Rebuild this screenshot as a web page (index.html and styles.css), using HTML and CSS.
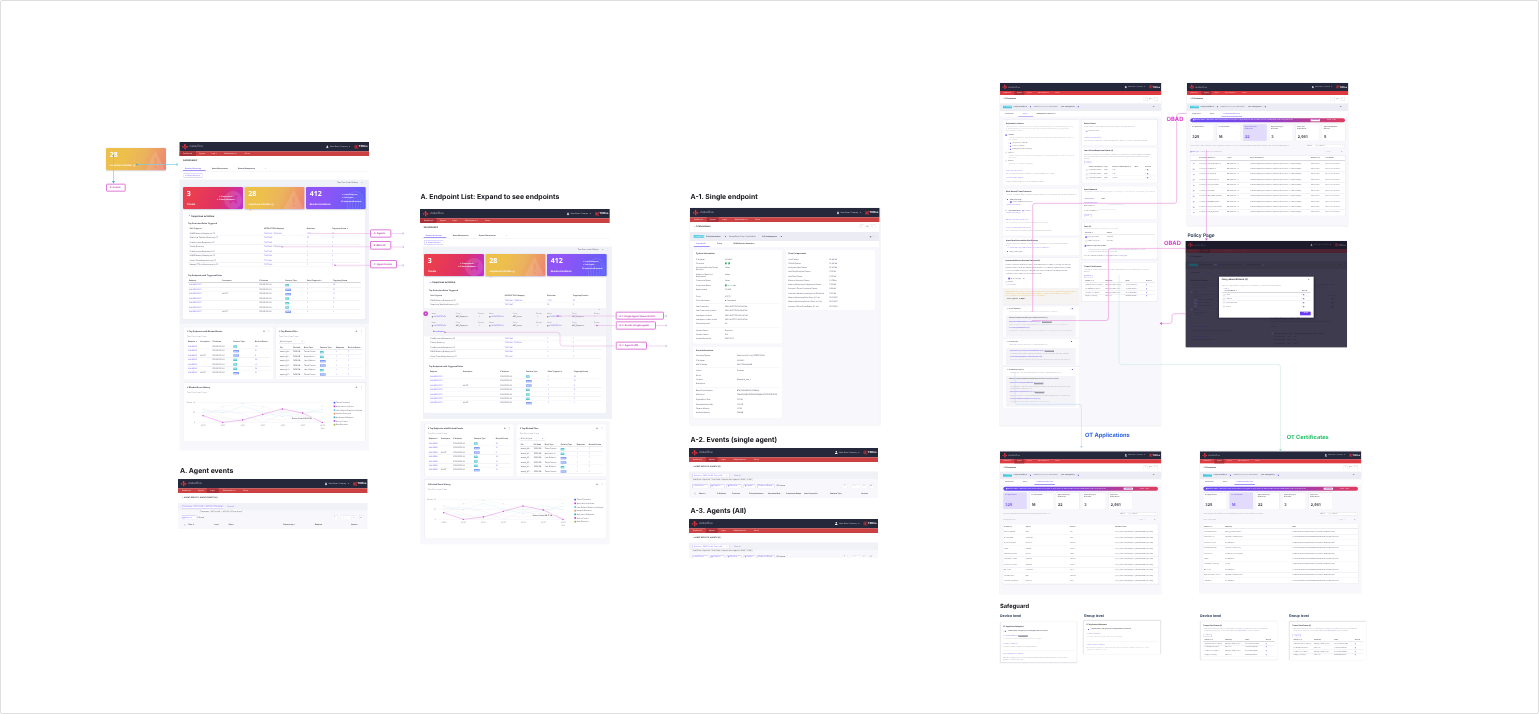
FILE: index.html
```html
<!DOCTYPE html>
<html lang="en">
<head>
<meta charset="utf-8">
<title>Stellar flow board</title>
<link rel="stylesheet" href="styles.css">
</head>
<body>
<main class="viewport"><div class="board" id="board"></div></main>
<script src="app.js"></script>
</body>
</html>
```

FILE: styles.css
```css
* { box-sizing: border-box; }
body { margin: 0; background: #fff; font-family: Inter, "Liberation Sans", sans-serif; }
.viewport { position: relative; width: 1539px; height: 714px; overflow: hidden; border: 1px solid #dedede; border-radius: 2px; }
/* The board is laid out at three units per pixel and shown at one third. */
.board { position: absolute; left: -1px; top: -1px; width: 4617px; height: 2142px; transform: scale(.33333333); transform-origin: 0 0; text-rendering: geometricPrecision; }
.frame, .note, .label, .links { position: absolute; }
.frame, .box { display: flex; flex-direction: column; }
.frame { background: #fff; font-size: 5px; color: #4a4a60; overflow: hidden; }
.frame.edge, .frame.ot { box-shadow: 0 0 4px #d8d8de; }
.frame.ot { font-size: 4.5px; }
.frame.open { overflow: visible; }
.box, .row, .side { flex: none; }
.side { display: flex; align-items: flex-start; }
.row { display: grid; align-items: center; align-content: center; white-space: nowrap; line-height: 1; }
.row > span { display: flex; align-items: center; gap: 2px; min-width: 0; }
.row svg { display: block; flex: none; }
.links { left: 0; top: 0; width: 4617px; height: 2142px; fill: none; }
.note { white-space: nowrap; line-height: 1; font-weight: 700; transform: translateY(-50%); color: #16161c; font-size: 20.6px; }
.note.safe { font-size: 17.3px; }
.note.mid { font-size: 14.6px; color: #23344c; font-weight: 600; }
.note.small { font-size: 10.8px; color: #2b405a; }
.note.obad { font-size: 17.4px; color: #e23bd3; }
.note.blue { font-size: 17.2px; color: #2f63e0; }
.note.green { font-size: 17px; color: #22bd62; }
.label { display: flex; align-items: center; padding-left: 8px; border: 3px solid #df7ad9; border-radius: 3px; background: #fff; color: #b93db4; font-size: 7.1px; font-weight: 700; white-space: nowrap; }
.topbar { background: #25273a; color: #fff; font-size: 5px; }
.topbar .brand { font-size: 1.75em; font-weight: 400; color: #a9aab6; }
.topbar .user { color: #d4d4dc; }
.topbar .tx { font-size: 1.7em; font-weight: 600; letter-spacing: -.03em; }
.nav { background: #cb4142; color: #f3caca; font-weight: 500; font-size: 5px; }
.ot .topbar, .ot .nav { font-size: 4.25px; }
.ot .nav { background: #dc3940; }
.navon { background: #a62f38; }
.gray { background: #f1f1f8; }
.light { background: #f8f8fc; }
.band { background: #ececf5; }
.h { font-weight: 700; color: #2f2f3b; font-size: 6.2px; }
.h.lg { font-size: 6.7px; }
.h5 { font-weight: 700; color: #3a3a48; font-size: 5.9px; }
.h5.caps { font-size: 5.4px; }
.ot .h5 { font-size: 4.9px; }
.th { font-weight: 600; color: #3c3c48; }
.m { color: #9393a6; }
.p { color: #7a5cf0; }
.g { color: #1fae55; }
.b { font-weight: 700; }
.tr { box-shadow: inset 0 -1px #e6e6ef; }
.thline { box-shadow: inset 0 -1px #b0b0bc; font-weight: 600; color: #3c3c48; }
.clip { overflow: hidden; }
.panel { background: #fff; border-radius: 4px; box-shadow: 0 0 3px #e8e8f1; }
.ob { box-shadow: inset 0 0 0 1px #a899f2; border-radius: 2px; color: #7a5cf0; background: #fff; }
.gb { box-shadow: inset 0 0 0 1px #d4d4e0; border-radius: 2px; background: #fff; }
.under { background: #7c5cf4; }
.rule { background: #e6e6ee; }
.card { position: relative; border-radius: 4px; color: #fff; font-weight: 600; box-shadow: 0 1px 4px #cfcfe0; }
.c1 { background: linear-gradient(110deg, #ea3d50 20%, #df3164 60%, #bf2ed2); }
.c2 { background: linear-gradient(110deg, #edc04c 30%, #ebb35c 60%, #ee8274); }
.c3 { background: linear-gradient(110deg, #8f55f6 30%, #7a59f7 60%, #5a5ff8); }
.big { font-family: "Open Sans", sans-serif; font-size: 21px; font-weight: 700; }
.cl { font-size: 6.6px; }
.mark { position: absolute; right: 2px; bottom: 0; width: 60px; height: 60px; opacity: .12; }
.tip { width: 0; height: 0; border: 5px solid transparent; border-top-color: #edb62f; border-bottom: 0; }
.pill { height: 7px; width: 11px; background: #55c6d4; color: #fff; font: 600 4px/7px Inter, sans-serif; text-align: center; }
.pill.s { width: 17px; background: #7f9df3; }
.stat { background: #fff; border-radius: 3px; box-shadow: 0 0 3px #e6e6f0; }
.stat.on { background: #e2dbfc; color: #6d4df0; }
.num { font-size: 11px; font-weight: 700; color: #33333f; }
.on .num, .on .th { color: #6d4df0; }
.ribbon { border-radius: 6px; background: linear-gradient(90deg, #6a48f2 15%, #8a3fd0 50%, #e03c5c); color: #fff; overflow: hidden; }
.done { width: 28px; height: 6px; background: #fff; color: #8844cc; text-align: center; line-height: 6px; }
.cyan { background: #49cbdc; border-radius: 1px; color: #fff; }
.tg { display: inline-block; flex: none; width: 9px; height: 5px; border-radius: 3px; border: 1px solid #d3d0ec; border-right: 4px solid #6f51f0; }
.cb { display: inline-block; flex: none; width: 5px; height: 5px; border: 1px solid #b9b9cc; border-radius: 1px; }
.cb.f { background: #6b4bf0; border-color: #6b4bf0; }
.rd { border-radius: 50%; }
.gq { display: inline-block; width: 5px; height: 6px; background: #31b45f; }
.gd { display: inline-block; width: 3px; height: 3px; background: #31b45f; }
.tag { background: #9a9aaa; color: #fff; padding: 1px 2px; }
.warn { background: #f5f4f3; color: #e5b84e; }
.sub { background: #f3f3f8; }
.primary { background: #6a3df0; color: #fff; font-weight: 600; }
.dim.frame { background: #3e3b4f; color: #27253a; }
.dim .topbar { background: #1c1a2b; }
.dim .topbar span { opacity: .6; }
.dim .nav { background: #4d2231; color: #793649; }
.dim .navon { background: #421d2c; }
.dim .band { background: #393648; }
.dim .cyan { background: #1e5864; }
.dim .th, .dim .h5 { color: #22202f; }
.dim .m { color: #2d2a3d; }
.dim .p { color: #35286f; }
.dim .tg, .dim .cb { opacity: .3; }
.dim .modal { background: #fff; box-shadow: 0 2px 6px #15132a; color: #55556a; }
.dim .modal .tg, .dim .modal .cb { opacity: 1; }
.dim .modal .th { color: #444450; }
.dim .modal .m { color: #9393a6; }
.dim .modal .p { color: #7a5cf0; }
.chart { display: block; overflow: visible; }
```

FILE: app.js
```js
// Layout helpers. A box keeps its children in one coordinate space and
// turns their positions into margins of ordinary flow items.
const stack = (items, x0, y0) => {
  let c = y0;
  return items.flat(3).map(i => { const m = i.top - c; c = i.top + i.h; return i.render(m, x0); }).join('');
};
const L = (y, cells, cls = '', o = {}) => {
  const h = o.h || 8;
  return { top: y - h / 2, h, render(m, x0) {
    const x = o.x ?? cells[0];
    let cols = [], html = '';
    for (let i = 0; i < cells.length; i += 2) {
      cols.push(i + 2 < cells.length ? (cells[i + 2] - cells[i]) + 'px' : '1fr');
      html += `<span>${cells[i + 1]}</span>`;
    }
    return `<div class="row ${cls}" style="margin:${m}px 0 0 ${x - x0}px;height:${h}px;${o.w ? `width:${o.w}px;` : ''}padding-left:${cells[0] - x}px;grid-template-columns:${cols.join(' ')}">${html}</div>`;
  } };
};
const B = (x, y, w, h, cls, items = [], ix = x, iy = y, extra = '') => ({ x, w, top: y, h, render: (m, x0) =>
  `<div class="box ${cls}" style="margin:${m}px 0 0 ${x - x0}px;width:${w}px;height:${h}px">${stack(items, ix, iy)}${extra}</div>` });
const H = (y, h, boxes) => ({ top: y, h, render(m, x0) {
  let c = x0;
  return `<div class="side" style="margin-top:${m}px;height:${h}px">${boxes.map(b => { const s = b.render(b.top - y, c); c = b.x + b.w; return s; }).join('')}</div>`;
} });
const table = (x, w, y, first, pitch, xs, head, rows) => [
  L(y, xs.flatMap((v, i) => [v, head[i]]), 'thline', { x, w, h: pitch * .9 }),
  ...rows.map((r, k) => L(first + k * pitch, xs.flatMap((v, i) => [v, r[i] ?? '']), 'tr', { x, w, h: pitch }))];
const para = (x, w, y, lines, cls = 'm', p = 6) => lines.map((t, i) => L(y + i * p, [x, t], 'clip ' + cls, { w, h: 6 }));
const frame = (x, y, w, h, items, ix = 0, iy = 0, cls = '') =>
  `<section class="frame ${cls}" style="left:${x}px;top:${y}px;width:${w}px;height:${h}px">${stack(items, ix, iy)}</section>`;
const P = t => `<span class="p">${t}</span>`;
const ICS = '<b class="pill">ICS</b>', SRV = '<b class="pill s">Server</b>';
const TG = '<i class="tg"></i>', CB = '<i class="cb"></i>', CF = '<i class="cb f"></i>', RD = '<i class="cb rd"></i>', RF = '<i class="cb rd f"></i>';
const CHEV = '<svg width="7" height="5" viewBox="0 0 7 5" fill="none" stroke="#6a4bf0" stroke-width="1.500"><path d="M.5 4 3.500 1l3 3"/></svg>';

const logo = k => `<svg width="${18 * k}" height="${18 * k}" viewBox="0 0 18 18" fill="#e5343c"><path d="M0 8h4l2 2-2 2-4-1zM7 0l4 2v6L8 10 6 7zM11 8h7v3l-4 1-4-2zM7 10l4 2v6l-4-2z"/></svg>`;
const man = k => `<svg width="${8 * k}" height="${9 * k}" viewBox="0 0 8 9" fill="#fff"><circle cx="4" cy="2.500" r="2.200"/><path d="M0 9V7l2.500-1.500h3L8 7v2z"/></svg>`;
const hex = k => `<svg width="${12 * k}" height="${13 * k}" viewBox="0 0 12 13" fill="none" stroke="#e5343c" stroke-width="2"><path d="M3 1 0 6.500 3 12M6 1v11M3 4l6 5M9 4l-6 5M9 1h3v11H9"/></svg>`;

const header = (x, y, w, active) => {
  const k = w / 569, q = (...c) => c.map((v, i) => i % 2 ? v : x + v * k);
  const tabs = [[0, 50, 12, 'Dashboard'], [50, 36, 60, 'Agents'], [86, 36, 96, 'Logs ▾'], [122, 62, 134, 'Administration ▾'], [184, 40, 196, 'About']];
  return [
    B(x, y, w, 28 * k, 'topbar', [L(y + 14 * k, q(8, logo(k), 29, '<span class="brand">stellarOne</span>', 440, man(k), 452, '<span class="user">Menu Demo Company</span>', 510, '▾', 525, hex(k), 538, '<span class="tx">TXOne</span>'), '', { h: 20 * k })]),
    B(x, y + 28 * k, w, 14 * k, 'nav', [H(y + 28 * k, 14 * k, tabs.map((t, i) => B(x + t[0] * k, y + 28 * k, t[1] * k, 14 * k, i === active ? 'navon' : '', [L(y + 35 * k, [x + t[2] * k, t[3]])])))])];
};

// Security dashboard
const ip = '192.168.222.141', dv = P('WIN-DESKTOP1');
const cardRow = (x, y) => H(y, 66, [
  B(x, y, 180, 66, 'card c1', [L(y + 19, [x + 11, '3'], 'big', { h: 18 }), L(y + 28, [x + 108, 'x &nbsp;Compromised ›'], '', { h: 6 }), L(y + 38, [x + 101, '<span style="color:#ffd35c">▲</span> 5 Attack Attempted']), L(y + 51, [x + 12, 'Threats'], 'cl')], x, y,
    '<svg class="mark" viewBox="0 0 60 60" fill="#fff"><path fill-rule="evenodd" d="M32 6a27 27 0 1 0 .1 0zM20 23l5-5 8 8 8-8 5 5-8 8 8 8-5 5-8-8-8 8-5-5 8-8z"/></svg>'),
  B(x + 185, y, 179, 66, 'card c2', [L(y + 19, [x + 196, '28'], 'big', { h: 18 }), L(y + 51, [x + 196, 'Suspicious Activities &nbsp;ⓘ'], 'cl')], x + 185, y,
    '<svg class="mark" viewBox="0 0 60 60" fill="#fff"><path fill-rule="evenodd" d="M30 2 60 60H0zM27 22h6v20h-6zM27 47h6v6h-6z"/></svg>'),
  B(x + 369, y, 179, 66, 'card c3', [L(y + 19, [x + 380, '412'], 'big', { h: 18 }), L(y + 23, [x + 478, 'x Login Behaviors ›']), L(y + 33, [x + 478, 'x Unit Logins ›']), L(y + 43, [x + 474, '29 Application Behaviors ›']), L(y + 52, [x + 380, 'Baseline Deviations'], 'cl')], x + 369, y,
    '<svg class="mark" viewBox="0 0 60 60" fill="none" stroke="#fff" stroke-width="3"><path d="M8 60C2 20 18 8 32 8s27 12 22 50M16 60c-6-30 4-43 16-43s20 12 14 43M24 60c-5-24 0-34 8-34s12 12 6 34M32 34v26"/></svg>')]);
const dashTop = [
  header(0, 0, 569, 0),
  L(56, [11, 'DASHBOARDS'], 'h'),
  L(79, [17, P('Security Monitoring'), 98, 'Asset Management', 176, 'System Management', 257, '+'], 'th'),
  B(11, 85, 68, 1.5, 'under'), B(0, 86.500, 569, 1, 'rule'),
  B(12, 94, 58, 13, 'ob', [L(100.500, [17, '⚙ Widget Manager'])])];
const period = L(123, [473, 'Time Period: Last 30 Days', 546, '⟳', 560, '⋮']);
const ruleCols = [31, 254, 382, 458];
const ruleHead = ['Rule Triggered', 'MITRE ATT&CK Mapping', 'Endpoints', 'Triggering Events ↓'];
const ruleRows = [
  ['LSASS Memory Dumping via C2', P('T1003.001 · T1003.004'), P('4,371'), P('28')],
  ['Suspicious Task Modification by C2', P('T1053.005'), P('28'), P('11')],
  ['Post Execution Enumeration C2', P('T1055.002'), P('5'), P('5')],
  ['Penalty Event Log', P('T1070.001 · T1070.014'), P('3'), P('3')],
  ['Post Execution Enumeration C2', P('T1055.001'), P('4'), P('3')],
  ['LSASS Memory Dumping via C2', P('T1003.001'), P('3'), P('3')],
  ['Create Token Manipulation by C2', P('T1134.001'), P('3'), P('3')],
  ['Manage PT Root Deactivation by C2', P('T1553.004'), P('3'), P('3')]];
const epHead = ['Endpoint', 'Description', 'IP Address', 'Function Type', 'Rules Triggered ↓', 'Triggering Events'];
const epRows = [['–', ICS, 6, 30], ['–', SRV, 5, 21], ['HQ-RT', SRV, 5, 11], ['–', ICS, 4, 15], ['–', ICS, 3, 7], ['–', ICS, 3, 6], ['HQ-RT', SRV, 2, 4]]
  .map(r => [dv, r[0], ip, r[1], P(r[2]), P(r[3])]);
const chart = `<svg class="chart" width="560" height="100" viewBox="42 240 560 100" fill="none">
 <path d="M85 248H462M85 277H462M85 307H462" stroke="#e8e8f0"/>
 <g stroke-width="1.300" opacity=".3"><path d="M99 267 158 278 218 259 278 276 337 289 398 280 457 268" stroke="#87c9ea"/><path d="M99 289 158 260 218 250 278 260 337 276 398 289 457 258" stroke="#c3dccb"/><path d="M99 280 158 296 218 299 278 290 337 278 398 265 457 278" stroke="#9dd9e2"/><path d="M99 267 158 289 218 307 278 296 337 300 398 289 457 300" stroke="#efc8ad"/><path d="M99 275 158 271 218 283 278 307 337 282 398 297 457 307" stroke="#b2bff5"/></g>
 <g fill="#a3d6cb" opacity=".7"><circle cx="99" cy="267" r="1.500"/><circle cx="158" cy="260" r="1.500"/><circle cx="218" cy="250" r="1.500"/><circle cx="278" cy="260" r="1.500"/><circle cx="337" cy="289" r="1.500"/><circle cx="457" cy="258" r="1.500"/><circle cx="457" cy="268" r="1.500"/><circle cx="158" cy="278" r="1.500"/></g>
 <path d="M99 287 158 307 218 300 278 283 337 267 398 279 457 307" stroke="#e07fe0" stroke-width="1.400"/>
 <g fill="#d234d6"><circle cx="99" cy="287" r="2"/><circle cx="158" cy="307" r="2"/><circle cx="218" cy="300" r="2"/><circle cx="278" cy="283" r="2"/><circle cx="337" cy="267" r="2"/><circle cx="398" cy="279" r="2"/><circle cx="457" cy="307" r="2"/></g>
 <path d="M362 290h68v12h-68z" fill="#fff" stroke="#e6e6ee" stroke-width=".6"/>
 <g font-size="5" fill="#8a8a9a"><text x="50" y="250">Events · 10</text><text x="69" y="279">25</text><text x="72" y="309">0</text><text x="93" y="317">07/22</text><text x="152" y="317">07/23</text><text x="212" y="317">07/24</text><text x="272" y="317">07/25</text><text x="332" y="317">07/26</text><text x="392" y="317">07/27</text><text x="451" y="317">07/28</text><text x="453" y="326">Date</text></g>
 <text x="366" y="298" font-size="5" font-weight="600" fill="#44444f">Device Control 08:17: <tspan font-weight="800">28</tspan></text>
 <g font-size="5" fill="#55556a">${[['Threat Prevention', '#4c5cf0'], ['Application Lockdown', '#d22fd6'], ['User-Defined Suspicious Objects', '#57c4e8'], ['Intrusion Detection', '#f0915a'], ['Application Safeguard', '#2ba7c0'], ['Device Control', '#b04ad8'], ['Data Execution', '#8fb83b']].map((l, i) => `<rect x="491" y="${245.500 + i * 11}" width="5" height="5" fill="${l[1]}"/><text x="498" y="${250 + i * 11}">${l[0]}</text>`).join('')}</g></svg>`;
const widgets = (y, h) => B(0, y, 569, h, 'light', [
  H(22, 155, [
    B(42, 22, 267, 155, 'panel', [
      L(35, [51, '⠿ Top Endpoints with Blocked Events', 280, '⟳', 294, '⋮'], 'h5'),
      L(49, [51, 'Time Period: Last 7 days'], 'm'),
      table(51, 249, 67, 80, 13.300, [54, 91, 127, 190, 255], ['Endpoint ↓', 'Description', 'IP Address', 'Function Type', 'Blocked Events'],
        [['–', ICS, '131'], ['–', SRV, '21'], ['HQ-RT', SRV, '8'], ['–', ICS, '20'], ['–', ICS, '46'], ['–', ICS, '20'], ['HQ-RT', SRV, '21']].map(r => [P('WIN-DESK1'), r[0], ip, r[1], P(r[2])]))]),
    B(317, 22, 269, 155, 'panel', [
      L(35, [327, '⠿ Top Blocked Files', 557, '⟳', 571, '⋮'], 'h5'),
      L(49, [327, 'Time Period: Last 7 days'], 'm'),
      B(326, 62, 78, 9, 'gb', [L(66.500, [330, 'All block types', 395, '▾'])]),
      table(327, 249, 84, 97, 13.300, [330, 369, 402, 450, 498, 534], ['File', 'File Hash', 'Block Type', 'Function Type', 'Endpoints', 'Blocked Events'],
        [['Threat Preven…', ICS], ['Application L…', ICS], ['User-Defined…', SRV], ['Threat Preven…', SRV], ['User-Defined…', ICS], ['Threat Preven…', SRV]].map((r, i) => ['sample_0' + i + '…', '7A7B42B…', r[0], r[1], P('4'), P('5')]))])]),
  B(42, 188, 544, 175, 'panel', [
    L(202, [51, '⠿ Blocked Event History', 557, '⟳', 571, '⋮'], 'h5'),
    L(217, [51, 'Time Period: Last 7 days'], 'm'),
    B(42, 240, 544, 100, '', [], 42, 240, chart)])
], 28, 13);

const dash1 = [dashTop,
  B(0, 113, 569, 434, 'gray', [
    period,
    cardRow(11, 135),
    B(11, 201, 547, 331, 'panel', [
      B(208, 201, 10, 5, 'tip'),
      L(222, [27, CHEV + ' Suspicious Activities'], 'h lg'),
      L(246, [26, 'Top Detection Rules Triggered'], 'h5'),
      table(26, 518, 262, 275, 13.400, ruleCols, ruleHead, ruleRows),
      L(400, [26, 'Top Endpoints with Triggered Rules'], 'h5'),
      table(26, 518, 416, 430, 13.300, [29, 129, 240, 318, 383, 461], epHead, epRows)])]),
  widgets(547, 379)];

const agentLine = y => [L(y, [35, 'Name', 107, 'Group', 175, 'Events', 207, 'Name', 278, 'Group', 349, 'Events', 381, 'Name', 456, 'Group', 522, 'Events'], 'm'),
  L(y + 9, [35, '▣ ' + P('WORKSTATION'), 107, 'ABC_Singapore', 177, P('4'), 207, '▣ ' + P('WORKSTATION'), 278, 'ABC_Japan', 350, P('4'), 381, '▣ ' + P('WORKSTATION'), 456, 'ABC_Singapore', 523, P('4')])];
const dash2 = [dashTop,
  B(9, 113, 567, 517, 'gray', [
    period,
    cardRow(12, 135),
    B(12, 201, 547, 411, 'panel', [
      B(208, 201, 10, 5, 'tip'),
      L(221, [28, CHEV + ' Suspicious Activities'], 'h lg'),
      L(245, [27, 'Top Detection Rules Triggered'], 'h5'),
      table(27, 518, 262, 275, 13.400, ruleCols, ruleHead, ruleRows.slice(0, 2)),
      B(12, 297, 547, 85, 'sub', [L(303, [536, '⊞']), agentLine(314), agentLine(341), L(368, [39, 'Show Details'], 'p b')]),
      ruleRows.slice(2, 7).map((r, k) => L(389 + k * 13.400, ruleCols.flatMap((v, i) => [v, r[i]]), 'tr', { x: 27, w: 518, h: 13.400 })),
      L(474, [27, 'Top Endpoints with Triggered Rules'], 'h5'),
      table(27, 518, 490, 503, 13.300, [30, 129, 240, 318, 383, 461], epHead, epRows)])]),
  widgets(637, 369)];

// Query result lists
const btn = (x, y, w, t, cls = 'ob') => B(x, y, w, 12, cls, [L(y + 6, [x + 4, t])]);
const pager = y => [btn(488, y, 15, '1', 'gb'), btn(515, y, 26, '‹ &nbsp; ›', 'gb'), btn(545, y, 14, '⊞', 'gb'), btn(567, y, 14, '⚙', 'gb')];
const events = [
  header(24, 477, 569, 2),
  L(534, [37, '‹ &nbsp;AGENT RESULTS: AGENT EVENTS (10)'], 'h5 caps'),
  B(24, 549, 569, 78, 'light', [
    B(24, 549, 569, 22, 'gray', [H(555, 11, [B(36, 555, 124, 11, 'ob', [L(560.500, [40, 'Timestamp : 2023-04-08 ~ 2023-07-12 00:00:00', 153, '×'])]), B(172, 555, 30, 11, 'p', [L(560.500, [172, 'Clear all'])])])]),
    B(88, 569, 130, 10, 'gb', [L(574, [91, 'Timestamp : 2023-04-08 ~ 2023-07-12 Rows from X'])]),
    H(586, 12, [btn(36, 586, 43, '▣ Export ▾'), B(82, 586, 40, 12, '', [L(592, [82, '2 Events'])]), ...pager(586)]),
    L(614, [42, CB, 55, 'Time ↓', 133, 'Level', 176, 'Event', 340, 'Function type', 435, 'Endpoint', 543, 'Options'], 'th')])];
const agents = [
  header(27, 54, 567, 1),
  L(111, [38, '‹ &nbsp;AGENT RESULTS: AGENTS (4)'], 'h5 caps'),
  B(27, 125, 567, 79, 'light', [
    B(27, 125, 567, 22, 'gray', [H(131, 11, [B(36, 131, 113, 11, 'ob', [L(136.500, [42, 'Detection : 2023-04-08 · Report OK', 139, '×'])]), B(162, 131, 30, 11, 'p', [L(136.500, [162, 'Clear all'])])])]),
    B(36, 145, 183, 8, 'gb', [L(149, [39, 'Last Event : Agent list : Scan if this computer isn’t registered 10:08 – 15:00 P…'], 'clip', { w: 178 })]),
    H(163, 12, [btn(36, 163, 49, '⊞ Add Group'), btn(90, 163, 44, '▣ Control ▾'), btn(139, 163, 46, '▣ Selection'), btn(190, 163, 36, '▣ Update'), btn(231, 163, 53, '⬒ Import / Export'), B(289, 163, 30, 12, '', [L(169, [289, '128 Agents'])]), ...pager(163)]),
    L(191, [43, CB, 57, 'Name ↓', 111, 'IP Address', 156, 'Protected', 207, 'Policy Inheritance', 264, 'Operation Mod…', 318, 'Component Status', 373, 'Last Connection', 450, 'Function Type', 544, 'Options'], 'th')])];

// Endpoint details
const kv = (x, x2, list) => list.map(r => L(r[0], [x, r[1], x2, r[2]]));
const single = [
  header(30, 84, 569, 1),
  H(133, 13, [B(42, 133, 100, 13, '', [L(139.500, [42, '‹ &nbsp;▢ Workstation'], 'h')]), btn(538, 133, 15, '1', 'gb'), B(557, 133, 8, 12, '', [L(139, [557, '/40'])]), btn(569, 133, 18, '‹ ›', 'gb')]),
  B(30, 156, 569, 27, 'band', [H(165, 8, [B(41, 165, 32, 8, 'cyan', [L(169, [44, 'CONNECTED'])]), B(78, 165, 500, 8, '', [L(169, [78, '<b>Policy Inheritance</b>', 130, TG, 147, 'Inherits From Group: User Default', 247, '<b>Self-management</b>', 297, TG, 569, '▣', 579, '⌄'])])])]),
  L(192, [48, P('General Info'), 111, 'Policy', 160, 'OBAD/Baseline Assurance'], 'th'),
  B(41, 199, 48, 2, 'under'),
  B(30, 201, 569, 534, 'light', [
    H(210, 281, [
      B(39, 210, 267, 281, 'panel', [L(222, [48, 'System Information'], 'h5'),
        kv(48, 135, [[238, 'IP Address', '10.1.100.6'], [250, 'Protection', '<i class="gq"></i>&nbsp; <i class="gq"></i>'], [263, 'Operations Needing Priority', 'Online'], [270, 'Detection', ''], [283, 'Number of Approved', 'Online'], [290, 'Applications', ''], [303, 'Connection Status', 'Online'], [316, 'Component Status', '<i class="gq"></i> Up-to-date'], [329, 'Agent Version', '3.1.2031'], [349, 'Group', 'ICS_TX'], [361, 'Policy Inheritance', '<i class="gd"></i> Customized']]),
        B(48, 371, 250, 1, 'rule'),
        kv(48, 135, [[380, 'Last Connection', '2024-01-29T11:30:12-09:00'], [393, 'Last Component Updated', '2024-01-29T11:30:20-09:00'], [406, 'Last Agent Updated', '2024-01-29T01:30:04-09:00'], [419, 'Last Approved List Update', '2024-01-15T14:30:25-09:00'], [432, 'Patches Imported', 'No']]),
        B(48, 443, 250, 1, 'rule'),
        kv(48, 135, [[451, 'License Status', 'Activated'], [464, 'License Version', 'Full'], [477, 'License Expires On', '2025-12-11']])]),
      B(318, 210, 267, 180, 'panel', [L(222, [325, 'Scan Components'], 'h5'),
        kv(325, 448, ['Virus Pattern', 'CPHOM Pattern', 'AI-Hyperbolism Pattern', 'IntelliTrap Exception Pattern', 'IntelliTrap Pattern', 'Behavior Detection Pattern', 'Memory Monitoring Configuration Pattern', 'Advanced Threat Correlation Pattern', 'Predictive Machine Learning Local File Model', 'Memory Monitoring Scan Driver (64-bit)', 'Memory Monitoring Service Driver (64-bit)', 'Advanced Threat Scan Engine (64-bit)'].map((t, i) => [238 + i * 12.850, t, ['18.405.00', '13.405.00', '12.409.00', '1.927.00', '1.925.00', '2.458.00', '1.322.00', '1.010.00', '1.966.00', '12.55.1053', '12.55.1053', '12.55.1053'][i]]))])]),
    B(39, 501, 267, 213, 'panel', [L(513, [48, 'Asset Information'], 'h5'),
      kv(48, 171, [[528, 'Operating System', 'Windows 10 (64-bit) (FTEST) 22H2'], [541, 'IP Address', '10.1.100.6'], [554, 'MAC Address', '00:15:5D:0A:00:0B']]),
      B(48, 563, 250, 1, 'rule'),
      kv(48, 171, [[573, 'Vendor', 'Siemens'], [587, 'Model', '–'], [600, 'Location', 'Minnesota_Line 4'], [612, 'Description', '–']]),
      B(48, 621, 250, 1, 'rule'),
      kv(48, 171, [[631, 'Baseb Serial Number', 'BT04DUE-NB248JXP8MHA'], [645, 'Main Label', '72AA3D9AB3482F3A6F3D0BACA5CD92F7F18428'], [659, 'System Drive Size', '512 GB'], [673, 'System Available Size', '433 GB'], [686, 'Physical Memory', '16 GB'], [698, 'Available Memory', '380 MB']])])])];

// OT pages
const otHead = (x, y, tab, w = 484) => [
  header(x, y, w, 1),
  H(y + 42, 12, [B(x + 9, y + 42, 80, 12, '', [L(y + 48, [x + 9, '‹ &nbsp;▢ Workstation'], 'h5')]), B(x + 430, y + 42, 14, 12, 'gb', [L(y + 48, [x + 435, '‹'])]), B(x + 446, y + 42, 9, 12, '', [L(y + 48, [x + 446, '1/40'])]), B(x + 458, y + 42, 16, 12, 'gb', [L(y + 48, [x + 461, '‹ ›'])])]),
  B(x, y + 61, w, 23, 'band', [H(y + 68, 8, [B(x + 9, y + 68, 27, 8, 'cyan', [L(y + 72, [x + 12, 'Connected'])]), B(x + 41, y + 68, 430, 8, '', [L(y + 72, [x + 41, '<b>Policy Inheritance</b>', x + 85, TG, x + 101, 'Inherits From Group: User Default', x + 184, '<b>Self-management</b>', x + 228, TG, x + 458, '⚙⌄'])])])]),
  L(y + 92, [x + 15, 'General Info', x + 69, tab === 1 ? P('Policy') : 'Policy', x + 109, tab === 2 ? P('OT/Baseline Assurance') : 'OBAD/Baseline Assurance'], 'th'),
  B(x + (tab === 1 ? 55 : 103), y + 99, tab === 1 ? 45 : 62, 2, 'under')];
const stats = (x, y, on, n) => H(y, 49, [['OT Applications', '', '325'], ['OT Certificates', '', '16'], ['Approved Script', 'Extensions', '22'], ['Approved Logon', 'Accounts', '3'], ['Approved', 'Applications', '2,981'], ['Approved Network', 'Devices', '5']].slice(0, n)
  .map((s, i) => B(x + i * 79, y, 70, 49, 'stat' + (i === on ? ' on' : ''), [L(y + 7, [x + i * 79 + 5, s[0]], 'th'), L(y + 13, [x + i * 79 + 5, s[1]], 'th', { h: 6 }), L(y + 37, [x + i * 79 + 6, s[2]], 'num', { h: 12 })])));
const otBody = (x, y, on, n, h, cols, head, rows, first, desc) => [otHead(x, y, 2),
  B(x, y + 101, 484, h - 101, 'light', [
    B(x + 10, y + 106, 464, 12, 'ribbon', [L(y + 112, [x + 18, '▣ MAINTENANCE', x + 59, 'Maintenance Mode is enabled: all changes on target endpoint will be added in the OT baseline list. Click to stop the mode', x + 371, '<b class="done">Complete</b>', x + 420, '00:15 · 12:00'], '', { w: 450 })]),
    stats(x + 10, y + 124, on, n),
    H(y + 183, 12, [B(x + 10, y + 183, 310, 12, '', [L(y + 188, [x + 10, desc], 'm clip', { w: 308 })]), B(x + 356, y + 183, 36, 10, 'gb', [L(y + 188, [x + 360, 'Search', x + 386, '▾'])]), B(x + 394, y + 183, 79, 10, 'gb', [L(y + 188, [x + 397, 'Search', x + 466, P('⌕')])])]),
    L(y + 206, [x + 10, on === 2 ? P('▣ Manage ▾') + ' 22 Approved Script Extensions' : on ? '16 OT Certificates' : '325 Applications', x + 414, '‹ &nbsp; 1/40 &nbsp; ›', x + 462, '⚙'], 'm'),
    B(x + 10, y + first - 24, 465, rows.length * 16.300 + 17, 'panel', [table(x + 10, 465, y + first - 16, y + first, 16.300, cols.map(c => x + c), head, rows)])])];
const scriptRows = ['Endpoint/Service/ClientTool', 'Endpoint/PresetGrid', 'Endpoint/Script/Host', 'ServicePoint/ScriptHost', 'Endpoint/ScriptHost.exe', 'Endpoint/Host.exe', 'Endpoint/Kernel/Module.exe', 'Endpoint/DeskMerge.exe', 'ServicePoint/ScriptHost.exe', 'ServicePoint/StylusHost'].map(t => [TG, 'C:/' + t, 'Machine:Run · 21', 'C:/Windows/Applications/bin/Software/Customization… C:/Windows/sy…', 'Batch Patch', '2022-11-07 01:08:33']);
const apps = [['Adobe Systems', 'DWG', '10.1'], ['Acrobat DWG', 'SYSREAD', '8.1.0'], ['Dropbox Update', 'Dropbox', '8.1802.1'], ['Elastic', 'Filebeat', '1.22.27'], ['Siemens Germany', 'Dimont', '3.190'], ['Trend Micro Client', 'Siemens', '4.180.21'], ['Johnson Controls', 'Siemens', '1.220.1'], ['MS Tools', 'Scripttree', '3.2.0'], ['Schweitzer Inc', 'ABB', '1.150.25'], ['Trimble Engineering', 'Inteconn', '2.8.0']].map(r => [...r, 'C:/Program Files (x86)/Inc. Systems/Desktop/GridSky']);
const certs = [['Schneider Electric', 'VeriSign Class 3 Public'], ['Certification Co', 'Symantec SHA256 Time'], ['Johnson Control', 'OT7 Network'], ['Rockwell Automat', 'Entrust Root Authority'], ['Johnson CP', 'GlobalSign GCC R45 PKI'], ['Elastic', 'OT7 Network'], ['Trend Micro Security', 'PE-File'], ['MS Tools', 'OT7 Network'], ['Hyundai Electric Inc LLC', 'Symantec SHA256 Time'], ['Trustworth', 'OT7 Network']].map((r, i) => [...r, ['C0D5F7B35E6D74BBA2A0D18FC8F09A3E73A9AD25FB15C', '7EE11D30A2B96F91C1B3B5D6A7BAA76B41B57CF8AAC84B7B26'][i % 2]]);

// Policy page, two columns of panels
const pol = [otHead(30, 24, 1),
  B(30, 125, 484, 927, 'light', [H(134, 868, [
    B(39, 134, 228, 868, '', [
      B(39, 134, 228, 196, 'panel', [L(146, [48, 'Application Lockdown'], 'h5'),
        para(48, 210, 157, ['This application Lockdown feature on the device will be enabled upon implementing the policy', 'If disabled settings, it might stop & not stop the lockdown while scanning 3rd party items', 'will be used for the list']),
        L(181, [46, RF + ' &nbsp;<b>Enable</b>']), para(57, 196, 190, ['Enabling application lockdown will analyze and activate the allowed list setting and deploy on', 'applications']),
        L(205, [55, TG + ' &nbsp;DLL/Driver Lockdown']), L(214, [55, TG + ' &nbsp;Script Lockdown']), L(223, [55, TG + ' &nbsp;Intelligent Runtime Learning']),
        L(233, [46, RD + ' &nbsp;Silence']), para(57, 196, 244, ['There is application lockdown and the analyzing of scanned files will not need to block from', 'application']),
        L(258, [46, RD + ' &nbsp;Disable']), para(57, 100, 268, ['Application Lockdown is disabled']),
        L(287, [48, 'Approved File Type (3)'], 'p'), para(48, 180, 297, ['Run configured software to OBAD for configured settings to OT files']),
        L(310, [48, '▢ Predict Insert Settings'], 'p'), para(48, 180, 320, ['Specify Settings in which 1 hour is installed file setting'])]),
      B(39, 342, 228, 140, 'panel', [L(351, [48, 'Multi-Method Threat Prevention'], 'h5'), para(48, 213, 360, ['The Real-Time Multi-Method Threat Prevention allows you to scan and quick check the threat list on the endpoint']),
        L(374, [46, TG + ' &nbsp;<b>Real-Time Scan</b>']), L(382, [60, CF + ' Predictive Machine Learning']), L(391, [48, '› Advanced Settings'], 'p'),
        L(407, [46, CB + ' &nbsp;<b>Scheduled Scan</b> &nbsp; ' + P('▣ Schedule')]), L(415, [48, '› Advanced Settings'], 'p'),
        L(436, [48, 'Manual Scan Item Exclusion (3)'], 'p'), para(48, 180, 445, ['Run configured Source to Filters that will expect in the scan']),
        L(458, [48, 'Action on the Infected Endpoint (3)'], 'p'), para(48, 180, 467, ['Run configured Source scan log path to adjust threat data setup'])]),
      B(39, 489, 228, 51, 'panel', [L(497, [48, 'Agent Data Abnormalities Alert Settings'], 'h5'), para(48, 213, 506, ['Enable to expect the system to create changed data sent from another server will setup', 'scan']), L(518, [53, '▢ Threat Alert High-Risk Operation at Suspicious Behavior'], 'p'), L(530, [46, TG + ' &nbsp;Daily Threat Agent'])]),
      B(39, 548, 228, 140, 'panel', [L(557, [46, 'Operations Behavior Anomaly Detection (8)'], 'h5'),
        para(46, 213, 569, ['⦾ Learn: Collect by network Anomaly of the baseline and process at no dangerous changing', '⦾ Detect: OBAD only when a system will be allowed to process and a system which checked', '⦿ Enforce: Request changing process will be blocked. This Mode includes learned data', '&nbsp; changing. Set process to block in the environment'], '', 9),
        L(611, [55, CF + ' Allow Privilege ' + TG]), L(622, [46, RD + ' Disable']), L(630, [48, 'Load Policies'], 'p'),
        B(39, 639, 228, 49, 'warn', [para(46, 214, 650, ['⚠ Multiple Mode of Behavior Stage, OBAD: Detection/Learn scan OTPL detected by Agent Operation', 'already running; which were allowed Baseline will not create “OBAD Baseline” on the device', 'and OT Assurance in the Agent list. Click OT Apps setup'], '', 6), L(673, [51, 'Learning Mode', 88, '<b>7 days ▾</b>'], 'th')])]),
      B(39, 694, 228, 92, 'panel', [L(702, [52, '▸ <b>□ Anti-Behavior</b>', 240, TG]), para(57, 190, 712, ['Control file control to watch latest data and threat behaviour settings']),
        B(48, 721, 209, 64, 'sub', [L(730, [57, '<b>Default ▢ Enable the Settings to enable the scanning</b>']), L(741, [57, 'Approved OBAD Behavior or Addition (4) ⓘ &nbsp;<span class="tag">APPROVED</span>'], 'p b'), para(57, 190, 751, ['This configuration cannot enable Network to check Addition from 1 to 17 Behaviors']), L(760, [57, '▢ File Dropped Behavior (3)'], 'p b'), para(57, 190, 769, ['An application runs an invalid log from the application to change and to avoid at setup processing'])])]),
      B(39, 792, 228, 80, 'panel', [L(800, [52, '▸ <b>□ AntiScript</b>', 238, TG]), para(57, 190, 810, ['Check file and script the sound of trusted system logs']),
        B(48, 819, 209, 51, 'sub', [L(828, [60, 'Approved Logon Script Exclude Behaviors (3) &nbsp;<span class="tag">APPROVED</span>'], 'p b'), para(60, 180, 837, ['To be approved by the company at the main to avoid if unauthorized scan operate to threat']), L(847, [60, '▢ PowerShell Register Script Extensions (4)'], 'p b'), para(60, 180, 856, ['Scan approved file or suspicious policy and unidentified script settings will remain by setup'])])]),
      B(39, 875, 228, 124, 'panel', [L(884, [52, '▸ <b>□ Baseline/Integrity</b>', 240, TG]), para(60, 170, 894, ['Check all file controls and the application threat to registries data policy']),
        B(48, 903, 209, 92, 'sub', [L(912, [57, '<b>Default ▢ Analyze Additional Applications Script on a policy unit list</b>']), L(925, [60, 'Application Safeguard Whitelist <span class="tag">APPROVED</span>'], 'p b'), para(60, 190, 935, ['Click Baseline, it will add a path in Application setup that changes. Click the recovery', 'check restarting settings to (4)']), L(952, [60, 'Approved Script/Execution (4) ⓘ <span class="tag">APPROVED</span>'], 'p b'), para(60, 180, 962, ['Agent policy will not work to baseline setting to restart the application to the enforced']), L(972, [60, '▢ Policy Assurance Addition to Script (4)'], 'p b'), para(60, 120, 982, ['This application requires to get detection on the target if'])])])]),
    B(275, 134, 227, 545, '', [
      B(275, 134, 227, 76, 'panel', [L(146, [282, 'Device Control'], 'h5'), para(282, 210, 156, ['Block unauthorized access (CD/USB/SD storage) to managed endpoints']), L(169, [284, TG + ' &nbsp;Device Control']), L(188, [282, 'Trusted USB Devices (1)'], 'p'), para(282, 212, 198, ['The USB device will be recorded at allowed list to restrict to accept to removable devices'])]),
      B(275, 219, 227, 104, 'panel', [L(228, [282, 'User-Defined Suspicious Objects (3)'], 'h5'), para(282, 213, 239, ['Add suspicious file indicators based on setting imported endpoint objects intelligence systems', 'actions. Objects will be blocked to advanced incident and logged agents. See also: Blocked', 'settings']), B(282, 258, 22, 10, 'ob', [L(263, [285, '+ Add ▾'])]),
        table(282, 213, 275, 286, 11.500, [288, 296, 342, 367, 434, 466], ['', 'Suspicious Object ↓', 'Type', 'Detection Status (Alert) ↓', 'Note', 'Actions'], [0, 1, 2].map(i => [CB, 'C:\\Virus\\bad.exe…', 'Hash', ['Low', 'Low', 'Critical'][i], '–', P('✎ ▣')]))]),
      B(275, 334, 227, 98, 'panel', [L(343, [282, 'Agent Password'], 'h5'), para(282, 213, 352, ['The password will be used by the agent for local sign-in on an endpoint. The following characters will be not used']), L(373, [284, P('Administrator'), 335, 'User'], 'th'), B(282, 381, 40, 1, 'under'), H(388, 9, [B(282, 388, 70, 9, '', [L(393, [282, 'New Password'])]), B(352, 388, 52, 9, 'gb')]), H(403, 9, [B(282, 403, 43, 9, '', [L(408, [282, 'Confirm Password'])]), B(325, 403, 52, 9, 'gb')]), B(282, 418, 24, 9, 'ob', [L(422.500, [286, 'Save'])])]),
      B(275, 444, 227, 109, 'panel', [L(455, [282, 'Patch (2)'], 'h5'), para(282, 213, 463, ['Upload a Security OTPL(3rd) patch components']), table(282, 213, 475, 487, 12, [286, 350], ['Patches ↓', 'Version'], [[CF + ' Patch_2.1.0.1031', '2.0.1011B'], [CB + ' Stellar 3.1 Patch1', '3.1.0.1182']]), L(513, [284, CF + ' <b>Pause Component update</b>']), para(295, 190, 525, ['The update will not be loaded. The agency will not need the last setting for patch', 'update, the server will push components']), L(544, [282, 'You can Enable the pattern for 24 pages to the ' + P('Update') + ' page'])]),
      B(275, 564, 227, 115, 'panel', [L(574, [282, 'Trusted Certifications'], 'h5'), para(282, 213, 584, ['Files will be trusted by Agents to avoid executable files and program settings by configured', 'settings']), B(282, 600, 26, 9, 'ob', [L(604.500, [285, '+ Import'])]),
        table(282, 213, 619, 630, 11.500, [286, 346, 407, 468], ['Issued To ↓', 'Issued By', 'Hash', 'Actions'], [['Siemens Tech Company', 'Verisign Class 3 Publ…', '7B4F7C0BDFD…'], ['Rockwell Automation', 'Verisign Class 3 Pub…', '7C0BDFDFABC…'], ['Emerson Process Co', 'Verisign Class 3 Pub…', '5F7C0BDFDAB…'], ['Beijing Company', '360.com', '85AAFAD3A08…']].map(r => [...r, P('▮')]))])])])])];

const modalRow = (y, t) => L(y, [204, CB + ' &nbsp;' + t, 439, P('✎ ▣')], 'tr', { x: 202, w: 265, h: 11 });
const policyDim = [header(92, 48, 484, 1),
  L(96, [101, '‹ &nbsp;▢ Workstation'], 'h5'),
  B(92, 109, 484, 23, 'band', [H(116, 8, [B(101, 116, 27, 8, 'cyan'), B(133, 116, 430, 8, '', [L(120, [133, '<b>Policy Inheritance</b>', 177, TG, 190, 'Inherits From Group: User Default', 276, '<b>Self-management</b>', 320, TG, 550, '⚙⌄'])])])]),
  L(143, [107, 'General Info', 154, P('Policy')], 'th'),
  H(155, 123, [
    B(101, 155, 91, 123, '', [L(166, [107, 'Application Lockdown'], 'h5'), para(107, 84, 178, ['This application Lockdown feature on the', 'If disabled settings, it might stop & not stop', 'will be used for the list']), L(201, [107, RD + ' Enable']), para(115, 76, 211, ['Enabling application lockdown', 'applications']), L(226, [118, TG + ' DLL/Driver Lockdown']), L(235, [118, TG + ' Script Lockdown']), L(244, [118, TG + ' Intelligent Runtime']), L(254, [107, RD + ' Silence']), para(115, 76, 264, ['There is application', 'application'])]),
    B(192, 155, 284, 123, 'modal', [L(165, [200, 'Policy-based Whitelist (4)', 459, '×'], 'h'), para(201, 220, 182, ['Select process needs to be approved or the behavior of the setting added Whitelist']), L(192, [204, '+ Add ▾'], 'p'),
      L(199, [209, 'Process Name ↓', 440, 'Actions'], 'thline', { x: 202, w: 265, h: 9 }), modalRow(211, 'Folder'), modalRow(222, 'Example'), modalRow(233, 'Certificate Hash'), modalRow(245, '123.bat'),
      B(435, 260, 32, 11, 'primary', [L(265.500, [446, 'Close'])])]),
    B(476, 155, 95, 123, '', [para(480, 85, 180, ['Block unauthorized access', 'settings']), L(212, [520, '› Actions']), L(222, [530, '▣ ✎']), L(234, [530, '▣ ✎']), L(246, [530, '▣ ✎'])])]),
  L(281, [345, 'User-Defined Suspicious Objects (3)'], 'h5'), para(345, 220, 291, ['Add suspicious file indicators based on setting imported endpoint objects intelligence']),
  L(307, [109, P('Approved File Type (3)'), 345, '+ Add ▾']), para(109, 150, 317, ['Run configured software to OBAD for configured settings']),
  L(326, [350, CB + ' Suspicious Object &nbsp; &nbsp; Type &nbsp; &nbsp; Detection Status (Alert) &nbsp; Note &nbsp; &nbsp; Actions'], 'th', { h: 7 }),
  L(335, [109, P('▢ Predict Insert Settings'), 355, 'C:\\Virus\\bad.exe &nbsp; &nbsp; Hash &nbsp; &nbsp; Low'], '', { h: 7 }), L(346, [109, 'Specify Settings in which 1 hour', 355, 'C:\\Virus\\bad.exe &nbsp; &nbsp; Hash &nbsp; &nbsp; Low']), L(358, [355, 'C:\\Virus\\bad.exe &nbsp; &nbsp; Hash &nbsp; &nbsp; Critical'])];

const safeA = [L(560, [39, 'OT Application Safeguard'], 'h5'), L(573, [39, TG + ' &nbsp;<b>Trusted files, changed by OT Safeguard list in machine</b>'], 'clip', { w: 205 }), L(588, [39, '▢ Update Assets (2) <span class="tag">APPROVED</span>'], 'p'), para(39, 210, 598, ['OT application are automatically matched to OT Agent']), L(611, [39, '▢ Hide / Trusted (4)'], 'p'), para(39, 210, 620, ['If matching files of selection to file maintenance']), B(39, 632, 214, 1, 'rule'), L(643, [39, 'Optional/Applied Process (3)'], 'p'), para(39, 208, 653, ['Manual by default and/or running. Additional files will be Blocked by admin of policy via AI', 'system to operation Options'])];
const safeB = [L(555, [289, 'OT Application Safeguard'], 'h5'), L(568, [289, TG + ' &nbsp;<b>Trusted files, changed by OT Safeguard list in machine</b>'], 'clip', { w: 170 }), L(583, [289, '▢ Hide / Trusted (4)'], 'p'), para(289, 200, 592, ['If not approved list on agent device in the package']), B(289, 604, 214, 1, 'rule'), L(615, [289, '▢ Authorized Process (3)'], 'p'), para(289, 208, 625, ['Allow files and agents process changes in the OT related OT Baseline at device or a rule', 'operation to detection to fail'])];
const safeCert = (x, y) => [L(y + 12, [x + 8, 'Trusted Certificates (4)'], 'h5'), para(x + 8, 210, y + 22, ['File trusted Certificate Scan to create suspicious endpoint, agents, are able to stop/resume', 'configured by endpoint. You can also select <span class="p">OT Certificates</span> to any OT related.']), B(x + 8, y + 37, 26, 10, 'ob', [L(y + 42, [x + 12, '+ Import'])]),
  table(x + 8, 214, y + 56, y + 67, 11.500, [x + 12, x + 73, x + 134, x + 195], ['Issued To ↓', 'Issued By', 'Hash', 'Actions'], [['Siemens Tech Company', 'Verisign Class 3 Publ…', 'B4F7C0BDFDFABA'], ['Rockwell Automation', '360.com', '7C0BDFDFABCDE'], ['Emerson Process Co', 'Verisign Class 3 Pub…', '5F7C0BDFDABAC'], ['Beijing Company', '360.com', '85AAFAD3A08EE']].map(r => [...r, P('▮')]))];

// Coordinates of notes, labels and links are in screen pixels.
const note = (x, y, t, cls = '') => `<div class="note ${cls}" style="left:${x * 3}px;top:${y * 3}px">${t}</div>`;
const label = (x, y, w, h, t) => `<div class="label" style="left:${x * 3}px;top:${y * 3}px;width:${w * 3}px;height:${h * 3}px">${t}</div>`;
const links = `<svg class="links" viewBox="0 0 1539 714">
 <g stroke="#7fcbe0" stroke-width=".7"><path d="M113.500 156V183M137 164.500H178M176 163.500l2 1-2 1"/></g><circle cx="113.500" cy="156" r=".8" fill="#3aa9c9"/><circle cx="137" cy="164.500" r=".8" fill="#3aa9c9"/><path d="M112 181h3l-1.500 2.500z" fill="#3aa9c9"/>
 <g stroke="#e9a9e0" stroke-width=".5"><path d="M310 233.500H370M282 246.800H370M335 265.300H370M391 233.500H404M391 247H404M397 265.300H404M558 316H615M597 325.500H615M445 332.300H557Q560 332.300 560 335V343Q560 346 563 346H615M663 316H667M656 325.500H667M647 346H667"/></g>
 <g fill="#c760bd"><circle cx="282" cy="246.800" r=".7"/><circle cx="335" cy="265.300" r=".8"/><circle cx="558" cy="316" r=".8"/><circle cx="597" cy="325.500" r=".8"/><circle cx="445" cy="332.300" r=".8"/></g>
 <g stroke="#9cbfe0" stroke-width=".6"><path d="M402.500 232.500l1.500 1-1.500 1M402.500 246l1.500 1-1.500 1M402.500 264.300l1.500 1-1.500 1M665.500 315l1.500 1-1.500 1M665.500 324.500l1.500 1-1.500 1M665.500 345l1.500 1-1.500 1"/></g>
 <circle cx="425.700" cy="313.700" r="2.400" fill="#c93fc4"/><circle cx="425.700" cy="313.700" r=".6" fill="#fff"/>
 <g stroke="#e78bdc" stroke-width=".6"><path d="M1032.700 312V206Q1032.700 203.300 1035 203.300H1174.500Q1176.700 203.300 1176.700 201V116Q1176.700 113.500 1179 113.500H1186.500M1032 320.500H1106Q1108.400 320.500 1108.400 318V251Q1108.400 248.400 1111 248.400H1185.500M1206.400 150V239.500M1186 313.700H1174.500Q1172 313.700 1172 316V321Q1172 323.400 1169.500 323.400H1160.500"/></g>
 <path d="M1162 322v3l-2.500-1.500zM1205 238.500h3l-1.600 2.300z" fill="#d65fca"/>
 <path d="M1119 275V362Q1119 364.400 1121.500 364.400H1278Q1280.400 364.400 1280.400 367V451" stroke="#c9eae0" stroke-width=".6"/>
 <path d="M1015 372V402Q1015 404.400 1017.500 404.400H1079Q1081.400 404.400 1081.400 407V448" stroke="#c3dbf4" stroke-width=".6"/>
 <path d="M1080 446h3l-1.500 2.300z" fill="#b9d5f2"/><path d="M1279 449h3l-1.500 2.300z" fill="#a5dccb"/></svg>`;

document.getElementById('board').innerHTML = [
  frame(318, 444, 180, 67, [B(0, 0, 180, 67, 'card c2', [L(19, [11, '28'], 'big', { h: 18 }), L(51, [11, 'Suspicious Activities &nbsp;ⓘ'], 'cl')], 0, 0, '<svg class="mark" viewBox="0 0 60 60" fill="#fff"><path fill-rule="evenodd" d="M30 2 60 60H0zM27 22h6v20h-6zM27 47h6v6h-6z"/></svg>')], 0, 0, 'open'),
  frame(538, 426, 569, 926, dash1),
  frame(534, 1437, 569, 150, events, 24, 477),
  frame(1260, 627, 569, 1006, dash2, 0, 0, 'open'),
  frame(2070, 624, 569, 651, single, 30, 84, 'edge'),
  frame(2067, 1344, 567, 150, agents, 27, 54),
  frame(2067, 1557, 567, 117, agents, 27, 54),
  frame(3000, 249, 484, 1028, pol, 30, 24, 'ot'),
  frame(3561, 249, 484, 428, otBody(96, 24, 2, 6, 428, [14, 37, 120, 189, 372, 414], ['', 'Script/Lib Extension ↓', 'Folder', 'Approved Behavior', 'Added From', 'Time Added'], scriptRows, 242, 'This operation list contains records for agents in this part. You can configure this list and exclude the exceptions from here as Maintenance'), 96, 24, 'ot'),
  frame(3557, 723, 484, 319, policyDim, 92, 48, 'ot dim'),
  frame(3000, 1354, 484, 429, otBody(30, 34, 0, 5, 429, [12, 77, 210, 345], ['Software ↓', 'Vendor', 'Version', 'Installation Path'], apps, 243, 'Applications listed here will be automatically added in the list of OT'), 30, 34, 'ot'),
  frame(3600, 1354, 484, 426, otBody(30, 34, 1, 5, 426, [12, 75, 277], ['Issued To ↓', 'Issued By', 'Hash'], certs, 242, 'Files created under these OT Certificates issued by the OT Certificates to be trusted'), 30, 34, 'ot'),
  frame(3002, 1866, 228, 121, safeA, 32, 546, 'ot panel'),
  frame(3251, 1862, 230, 100, safeB, 281, 542, 'ot panel'),
  frame(3602, 1864, 229, 115, safeCert(32, 544), 32, 544, 'ot panel'),
  frame(3869, 1865, 229, 115, safeCert(299, 545), 299, 545, 'ot panel')
].join('') + links + [
  note(180, 470.300, 'A. Agent events'), note(420.500, 197, 'A. Endpoint List: Expand to see endpoints'), note(690.500, 197, 'A-1. Single endpoint'),
  note(690.500, 439.800, 'A-2. Events (single agent)'), note(690.500, 510.500, 'A-3. Agents (All)'),
  note(1187.500, 235.300, 'Policy Page', 'mid'), note(1166.500, 119, 'OBAD', 'obad'), note(1164, 243, 'OBAD', 'obad'),
  note(1085, 435, 'OT Applications', 'blue'), note(1286.800, 437.500, 'OT Certificates', 'green'), note(1000, 606, 'Safeguard', 'safe'),
  note(1000, 616, 'Device level', 'small'), note(1084, 616, 'Group level', 'small'), note(1200, 616, 'Device level', 'small'), note(1289, 616, 'Group level', 'small'),
  label(106, 183.500, 19.700, 8.300, 'A. Events'), label(370, 229.300, 21.300, 8.500, 'A. Agents'), label(370, 241, 21.300, 8.700, 'B. Mitre ID'), label(370, 260, 27, 8.300, 'C. Agent Events'),
  label(615.500, 311.700, 48.500, 8, 'A-1. Single Agent (General Info)'), label(615.500, 321.300, 40.500, 8.300, 'A-2. Events (single agent)'), label(615.500, 341.500, 31.500, 8.300, 'A-3. Agents (All)')].join('');
```
